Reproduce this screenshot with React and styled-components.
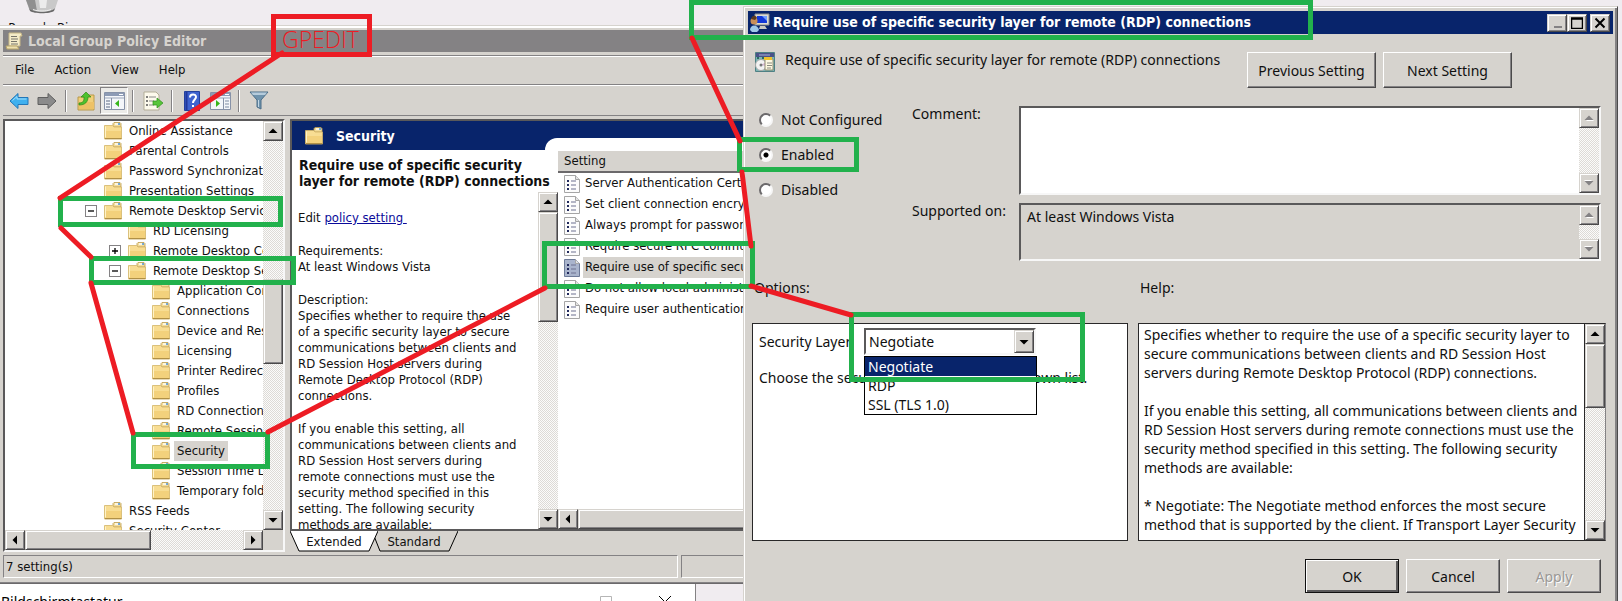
import { useState } from 'react';
import styled, { createGlobalStyle, css } from 'styled-components';

const face = '#d6d3ce';
const navy = '#08246b';
const tahoma = "'DejaVu Sans Condensed', 'DejaVu Sans', sans-serif";
const segoe = "'Noto Sans', 'Open Sans', sans-serif";

const GlobalStyle = createGlobalStyle`
  * {
    box-sizing: border-box;
  }
  body {
    margin: 0;
    overflow: hidden;
  }
  button, input, select, textarea {
    font: inherit;
    color: inherit;
    margin: 0;
  }
`;

const raised = css`
  border: 1px solid;
  border-color: ${face} #4a494a #4a494a ${face};
  box-shadow: inset 1px 1px 0 #fff, inset -1px -1px 0 #848284;
`;

const sunken = css`
  border: 2px solid;
  border-color: #5a595a #f7f7f7 #f7f7f7 #5a595a;
`;

const Desktop = styled.main`
  position: relative;
  height: 100vh;
  overflow: hidden;
  background: #f0ecf0;
  font-family: ${tahoma};
  font-size: 13px;
  line-height: 16px;
  color: #101010;
`;

const DesktopIcon = styled.div`
  width: 84px;
  display: flex;
  flex-direction: column;
  align-items: center;
  gap: 6px;
`;

/* ---------- scroll bars ---------- */

const Bar = styled.div`
  flex: none;
  display: flex;
  flex-direction: ${(p) => (p.$horizontal ? 'row' : 'column')};
  ${(p) => (p.$horizontal ? 'height: 20px;' : 'width: 20px;')}
  background: repeating-conic-gradient(#fbfbfa 0 25%, #dddad6 0 50%) 0 0 / 2px 2px;
`;

const BarButton = styled.button`
  flex: none;
  width: 20px;
  height: 20px;
  padding: 0;
  display: flex;
  align-items: center;
  justify-content: center;
  background: ${face};
  ${raised}
  svg {
    transform: rotate(${(p) => p.$turn}deg);
  }
`;

const Thumb = styled.div`
  flex: none;
  background: ${face};
  ${(p) => (p.$horizontal ? 'width' : 'height')}: ${(p) => p.$size}px;
  ${(p) => (p.$horizontal ? 'margin-left' : 'margin-top')}: ${(p) => p.$start}px;
  ${raised}
`;

const Rest = styled.div`
  flex: 1;
`;

const Arrow = ({ off }) => (
  <svg width="10" height="6" viewBox="0 0 10 6">
    {off && <path d="M2 6h8L6 2z" fill="#fff" />}
    <path d="M0.5 5h9L5 0.5z" fill={off ? '#848284' : '#000'} />
  </svg>
);

const ScrollBar = ({ horizontal, start = 0, size = 0, off }) => (
  <Bar $horizontal={horizontal}>
    <BarButton $turn={horizontal ? -90 : 0} disabled={off} aria-label={horizontal ? 'Left' : 'Up'}>
      <Arrow off={off} />
    </BarButton>
    {size > 0 && <Thumb $horizontal={horizontal} $start={start} $size={size} />}
    <Rest />
    <BarButton $turn={horizontal ? 90 : 180} disabled={off} aria-label={horizontal ? 'Right' : 'Down'}>
      <Arrow off={off} />
    </BarButton>
  </Bar>
);

/* ---------- icons ---------- */

const FolderIcon = () => (
  <svg width="18" height="18" viewBox="0 0 18 18">
    <path d="M9 3V1.5L10 0.5h6l1 1V5H9z" fill="#f3dc9a" stroke="#b99a4e" strokeWidth="0.8" />
    <path d="M11 2h4" stroke="#fff" strokeWidth="1.4" />
    <path d="M14 2h2" stroke="#4b93d8" strokeWidth="1.4" />
    <path d="M0.5 3.5h8l1.5 1.5h7.5v12H0.5z" fill="#f8dd93" stroke="#d3b568" strokeWidth="0.8" />
    <path d="M1 9h16v8H1z" fill="#f0c96c" opacity="0.6" />
    <path d="M1 16.6h16.5" stroke="#a98a42" />
    <path d="M1.5 4.5v11" stroke="#fff3c8" />
  </svg>
);

const PolicyIcon = ({ selected }) => (
  <svg width="16" height="18" viewBox="0 0 16 18">
    <path
      d="M0.5 0.5h11l4 4v13H0.5z"
      fill={selected ? '#a9b4cc' : '#fcfcfc'}
      stroke={selected ? '#6d7a98' : '#a5a5a5'}
    />
    <path d="M11.5 0.5v4h4" fill="#e4e4e4" stroke="#a5a5a5" />
    <path d="M3 6h2M3 10h2M3 14h2" stroke="#222a5c" strokeWidth="2" />
    <path d="M7 6h5M7 10h5M7 14h5" stroke="#6c7090" strokeWidth="1" />
  </svg>
);

const ScrollIcon = () => (
  <svg width="18" height="18" viewBox="0 0 18 18">
    <path d="M4 1h12l1 3h-2v10H4z" fill="#f5ecc9" stroke="#c9b987" />
    <path d="M1 14h11l2 3H2z" fill="#efe0ae" stroke="#b7a56d" />
    <path d="M6 4.5h6M6 7h7M6 9.5h6M6 12h7" stroke="#77746a" />
  </svg>
);

const BackIcon = ({ grey }) => (
  <svg width="20" height="18" viewBox="0 0 20 18">
    <path
      d="M1 9L9 1.5v4h10v7H9v4z"
      transform={grey ? 'rotate(180 10 9)' : undefined}
      fill={grey ? '#8b8b8b' : '#3fb0ef'}
      stroke={grey ? '#5f5f5f' : '#2377b8'}
    />
    {!grey && <path d="M3.5 8.5L8 4.5v2.5h9.5" fill="none" stroke="#a5e0fb" />}
  </svg>
);

const UpFolderIcon = () => (
  <svg width="20" height="20" viewBox="0 0 20 20">
    <path d="M2 6h9l1-2h6v15H2z" fill="#f1cf79" stroke="#b9994b" />
    <path d="M3 11h15v7H3z" fill="#eec266" />
    <path d="M3 12c5 0 5-3 5-6H5l5-5 5 5h-3c0 5-3 8-9 8z" fill="#4dc22e" stroke="#2b8a17" strokeWidth="0.7" />
  </svg>
);

const PaneIcon = ({ flip }) => (
  <svg width="21" height="18" viewBox="0 0 21 18">
    <path d="M0.5 0.5h20v17H0.5z" fill="#f4f6fa" stroke="#8792a8" />
    <path d="M1 1h19v3H1z" fill="#8d9bb5" />
    <path d="M15 2.5h4" stroke="#fff" />
    <path d="M1 6h19" stroke="#9aa5b8" />
    {flip ? (
      <>
        <path d="M13.5 6v11" stroke="#8792a8" />
        <path d="M15 9h4M15 12h4M15 15h4" stroke="#7d8ba3" />
        <path d="M6 8l4 3.5-4 3.500z" fill="#37b51b" />
      </>
    ) : (
      <>
        <path d="M7.5 6v11" stroke="#8792a8" />
        <path d="M2 9h4M2 12h4M2 15h4" stroke="#5d6b83" />
        <path d="M15 8l-4 3.5 4 3.500z" fill="#37b51b" />
      </>
    )}
  </svg>
);

const ExportIcon = () => (
  <svg width="20" height="20" viewBox="0 0 20 20">
    <path d="M1 1h12l3 3v15H1z" fill="#fdfaec" stroke="#b3ad97" />
    <path d="M3 6h2M3 10h2M3 14h2" stroke="#555" strokeWidth="1.5" />
    <path d="M6 6h7M6 10h5M6 14h5" stroke="#8a8a8a" />
    <path d="M10 10h4V7l6 5-6 5v-3h-4z" fill="#58c53a" stroke="#2f8f1c" strokeWidth="0.7" />
  </svg>
);

const HelpIcon = () => (
  <svg width="16" height="20" viewBox="0 0 16 20">
    <path d="M0.5 0.5h15v19H0.5z" fill="#3f63cf" stroke="#24419c" />
    <path d="M2.5 1v18" stroke="#22399a" strokeWidth="2" />
    <path d="M6 6.5c0-4 6-4 6-0.5 0 2.5-3 2.5-3 6" fill="none" stroke="#fff" strokeWidth="2" />
    <path d="M8 14h2v2H8z" fill="#fff" />
  </svg>
);

const FunnelIcon = () => (
  <svg width="20" height="19" viewBox="0 0 20 19">
    <path d="M1 1h18l-7 8v9l-4-2V9z" fill="#6f93ad" stroke="#4b6d87" />
    <path d="M2 1.5h16L16 4H4z" fill="#b5cbdb" />
    <path d="M9.5 9v7" stroke="#c3d6e3" />
  </svg>
);

const BinIcon = () => (
  <svg width="34" height="14" viewBox="0 0 34 14">
    <path d="M1 0h32l-3 9c-3 5-23 5-26 0z" fill="#c9c9c9" />
    <path d="M1 0h9l2 11C8 11 5 10 4 8z" fill="#8f8f8f" />
    <path d="M14 0h8l-1 8h-6z" fill="#ececec" />
    <path d="M4 8c4 5 22 5 26 0l-1 3c-4 3-20 3-24 0z" fill="#6a6a6a" />
    <path d="M8 9.5c5 2 13 2 18 0" fill="none" stroke="#efefef" />
  </svg>
);

const UserScreenIcon = () => (
  <svg width="20" height="20" viewBox="0 0 20 20">
    <path d="M5 1h14v11H5z" fill="#dcdcd6" stroke="#8e8e8a" />
    <path d="M7 3h10v7H7z" fill="#1238d6" />
    <path d="M12 3h5v5z" fill="#6f9dff" />
    <path d="M10 13h5l2 3H9z" fill="#c9c9c4" />
    <circle cx="4" cy="8" r="3.5" fill="#c98f5a" />
    <path d="M1 6c1-4 5-4 6-1L5 7z" fill="#5b3a1e" />
    <path d="M0 17c0-6 8-6 9 0l-2 2H2z" fill="#9fc8ea" />
  </svg>
);

const SettingsIcon = () => (
  <svg width="20" height="20" viewBox="0 0 20 20">
    <path d="M0.5 0.5h19v19H0.5z" fill="#79b5b5" stroke="#4f8084" />
    <path d="M1 1h18v4H1z" fill="#4a5288" />
    <path d="M4 3h11" stroke="#aab3d8" />
    <path d="M3 5v2M8 5v2" stroke="#2c6a60" strokeWidth="2" />
    <circle cx="6" cy="13" r="5.5" fill="#f2f2f2" stroke="#a7a7a7" />
    <path d="M6 13l5-3v4z" fill="#d9b7d6" />
    <circle cx="6" cy="13" r="1.5" fill="#777" />
    <path d="M10 7h8v11h-8z" fill="#fdf8e0" stroke="#8f8a70" />
    <path d="M9 5h8v3H9z" fill="#f0c22c" />
    <path d="M12 11h5M12 13.5h5M12 16h4" stroke="#8a8a80" />
  </svg>
);

/* ---------- policy editor window ---------- */

const EditorWindow = styled.section`
  position: absolute;
  top: 25px;
  left: -2px;
  right: 40%;
  padding: 4px 4px 5px;
  background: ${face};
  border: 1px solid;
  border-color: ${face} #4a494a #6b696b;
  box-shadow: inset 0 2px 0 #fff, inset 0 -1px 0 #848284;
`;

const InactiveTitle = styled.header`
  display: flex;
  align-items: center;
  gap: 5px;
  height: 22px;
  margin-bottom: 3px;
  padding-left: 2px;
  background: #848284;
  color: ${face};
  font-size: 14px;
  font-weight: bold;
`;

const MenuBar = styled.nav`
  display: flex;
  align-items: center;
  height: 30px;
  padding-left: 2px;
  border-top: 1px solid #848284;
  border-bottom: 1px solid #848284;
  box-shadow: inset 0 1px 0 #fff;
`;

const MenuItem = styled.button`
  padding: 0 10px;
  border: 0;
  background: none;
`;

const Toolbar = styled.div`
  display: flex;
  align-items: center;
  height: 31px;
  margin-bottom: 3px;
  padding-left: 2px;
  border-top: 1px solid #fff;
  border-bottom: 1px solid #848284;
`;

const ToolButton = styled.button`
  display: flex;
  align-items: center;
  justify-content: center;
  width: 28px;
  height: 27px;
  padding: 0;
  border: 1px solid transparent;
  background: none;
  ${(p) =>
    p.$pressed &&
    css`
      background: #ecebe8;
      border-color: #848284 #fff #fff #848284;
    `}
`;

const ToolDivider = styled.span`
  width: 2px;
  height: 22px;
  margin: 0 5px 0 4px;
  background: linear-gradient(to right, #848284 50%, #fff 50%);
`;

const Panes = styled.div`
  display: flex;
  height: 433px;
  gap: 5px;
`;

const TreePane = styled.div`
  width: 282px;
  flex: none;
  display: flex;
  flex-direction: column;
  border: 2px solid;
  border-color: #5a595a #f7f7f7 #f7f7f7 #5a595a;
  background: #fff;
`;

const TreeView = styled.div`
  flex: 1;
  min-height: 0;
  display: flex;
`;

const TreeFooter = styled.div`
  padding-right: 20px;
  background: ${face};
`;

const Tree = styled.ul`
  flex: 1;
  min-width: 0;
  margin: 0;
  padding: 0 0 0 80px;
  list-style: none;
  overflow: hidden;
`;

const TreeItem = styled.li`
  display: flex;
  align-items: center;
  gap: 4px;
  height: 20px;
  padding-left: ${(p) => p.$level * 24}px;
  white-space: nowrap;
  svg {
    flex: none;
  }
`;

const Expander = styled.span`
  flex: none;
  display: flex;
  align-items: center;
  justify-content: center;
  width: 12px;
  height: 12px;
  margin-right: 3px;
  border: 1px solid ${(p) => (p.$shown ? '#848284' : 'transparent')};
`;

const Sign = ({ open }) => (
  <svg width="8" height="8" viewBox="0 0 8 8">
    <path d={open ? 'M1 4h6' : 'M1 4h6M4 1v6'} stroke="#000" strokeWidth="1.3" />
  </svg>
);

const ItemText = styled.span`
  padding: 2px 3px;
  background: ${(p) => (p.$selected ? face : 'transparent')};
`;

const DetailsPane = styled.div`
  flex: 1;
  min-width: 0;
  display: flex;
  flex-direction: column;
`;

const DetailsFrame = styled.div`
  flex: 1;
  min-height: 0;
  display: flex;
  flex-direction: column;
  border: 2px solid;
  border-color: #5a595a #f7f7f7 #5a595a #5a595a;
  background: #fff;
`;

const DetailsHeader = styled.div`
  display: flex;
  height: 29px;
  background: ${navy};
`;

const DetailsTitle = styled.h2`
  display: flex;
  align-items: center;
  gap: 13px;
  width: 253px;
  flex: none;
  margin: 0;
  padding-left: 13px;
  color: #fff;
  font-size: 14px;
`;

const Shoulder = styled.div`
  flex: 1;
  align-self: flex-end;
  height: 12px;
  border-top-left-radius: 12px;
  background: #fff;
`;

const DetailsBody = styled.div`
  flex: 1;
  min-height: 0;
  display: flex;
`;

const Description = styled.div`
  width: 266px;
  flex: none;
  display: flex;
  flex-direction: column;
`;

const PolicyName = styled.h3`
  flex: none;
  margin: 0;
  padding: 7px 0 3px 7px;
  font-size: 14px;
  white-space: pre-line;
`;

const DescriptionScroll = styled.div`
  flex: 1;
  min-height: 0;
  display: flex;
`;

const DescriptionText = styled.div`
  flex: 1;
  overflow: hidden;
  padding: 18px 0 0 6px;
  white-space: pre-line;
  p {
    margin: 0 0 17px;
  }
  a {
    color: #0a0a9a;
    white-space: pre;
  }
`;

const SettingsList = styled.div`
  flex: 1;
  min-width: 0;
  display: flex;
  flex-direction: column;
`;

const SettingsTable = styled.table`
  width: 100%;
  margin-top: 1px;
  border-spacing: 0;
  white-space: nowrap;
  th {
    height: 22px;
    padding: 0 6px;
    text-align: left;
    font-weight: normal;
    background: ${face};
    border-bottom: 2px solid #6b696b;
  }
  td {
    height: 21px;
    padding: 0;
  }
`;

const SettingCell = styled.div`
  display: flex;
  align-items: center;
  padding-left: 6px;
  span {
    flex: 1;
    margin-left: 3px;
    padding: 2px 2px 3px;
    background: ${(p) => (p.$selected ? face : 'transparent')};
  }
`;

const TabStrip = styled.div`
  display: flex;
  height: 21px;
`;

const Tab = styled.button`
  position: relative;
  width: 88px;
  padding: 0;
  margin-right: -8px;
  border: 0;
  background: none;
  z-index: ${(p) => (p.$active ? 1 : 0)};
  svg {
    position: absolute;
    inset: 0;
  }
  span {
    position: relative;
  }
`;

const StatusBar = styled.footer`
  display: flex;
  gap: 3px;
  height: 23px;
  margin-top: 3px;
`;

const StatusCell = styled.div`
  flex: ${(p) => (p.$wide ? '0 0 675px' : '1')};
  padding: 3px 2px;
  border: 1px solid;
  border-color: #848284 #fff #fff #848284;
`;

/* ---------- keyboard window at the bottom ---------- */

const KeyboardWindow = styled.section`
  position: absolute;
  top: 583px;
  left: 0;
  width: 696px;
  display: flex;
  padding: 9px 24px 0 1px;
  border-right: 1px solid #848284;
  background: #fff;
  font-family: ${segoe};
  font-size: 14px;
  line-height: 20px;
  color: #000;
`;

const KeyboardTitle = styled.span`
  flex: 1;
`;

const WindowControls = styled.div`
  display: flex;
  gap: 47px;
  padding-top: 4px;
`;

/* ---------- policy dialog ---------- */

const Dialog = styled.section`
  position: absolute;
  top: 6px;
  left: 743px;
  right: 4px;
  bottom: -8px;
  padding: 4px;
  background: ${face};
  border: 1px solid;
  border-color: ${face} #4a494a #4a494a ${face};
  box-shadow: inset 1px 1px 0 #fff, inset -2px 0 0 #848284;
  font-family: ${segoe};
  font-size: 14px;
  line-height: 19px;
`;

const ActiveTitle = styled.header`
  display: flex;
  align-items: center;
  gap: 3px;
  height: 23px;
  padding: 0 3px 0 2px;
  background: ${navy};
  color: #fff;
  font-family: ${tahoma};
  font-size: 14px;
  font-weight: bold;
  strong {
    flex: 1;
  }
`;

const TitleButtons = styled.div`
  display: flex;
  color: #000;
`;

const TitleButton = styled.button`
  width: 20px;
  height: 18px;
  padding: 0;
  margin-left: ${(p) => (p.$apart ? 3 : 0)}px;
  display: flex;
  align-items: center;
  justify-content: center;
  background: ${face};
  ${raised}
`;

const DialogBody = styled.div`
  padding: 18px 7px 0 4px;
`;

const PolicyHeader = styled.div`
  display: flex;
  gap: 7px;
  padding-left: 3px;
  margin-bottom: 18px;
`;

const PolicyLabel = styled.p`
  width: 462px;
  margin: 0 -7px 0 3px;
  line-height: 16px;
`;

const PushButton = styled.button`
  width: ${(p) => (p.$wide ? 129 : 94)}px;
  height: ${(p) => (p.$wide ? 36 : 34)}px;
  padding: 0;
  background: ${face};
  border: 1px solid;
  border-color: #fff #4a494a #4a494a #fff;
  box-shadow: inset -1px -1px 0 #848284;
  ${(p) =>
    p.$main &&
    css`
      border-color: #101010;
      box-shadow: inset 1px 1px 0 #fff, inset -2px -2px 0 #5a595a;
    `}
  &:disabled {
    color: #9a9896;
    text-shadow: 1px 1px 0 #fff;
  }
`;

const StateGrid = styled.div`
  display: grid;
  grid-template-columns: 157px 107px 1fr;
  grid-template-rows: 89px 58px;
  row-gap: 8px;
  padding: 0 5px 0 3px;
  margin-bottom: 17px;
`;

const RadioGroup = styled.div`
  grid-row: span 2;
  display: flex;
  flex-direction: column;
  gap: 8px;
`;

const RadioLabel = styled.label`
  display: flex;
  align-items: center;
  gap: 8px;
  line-height: 27px;
`;

const Radio = styled.input.attrs({ type: 'radio' })`
  appearance: none;
  width: 14px;
  height: 14px;
  margin-left: 4px;
  border: 2px solid;
  border-color: #6b696b #f7f7f7 #f7f7f7 #6b696b;
  border-radius: 50%;
  background: #fff;
  &:checked {
    background: radial-gradient(circle, #000 2px, #fff 3px);
  }
`;

const FieldLabel = styled.label`
  line-height: 16px;
`;

const Field = styled.div`
  display: flex;
  background: ${(p) => (p.$readOnly ? face : '#fff')};
  ${sunken}
  textarea {
    flex: 1;
    min-width: 0;
    padding: 2px 6px;
    border: 0;
    outline: 0;
    resize: none;
    overflow: hidden;
    background: transparent;
  }
`;

const Panels = styled.div`
  display: grid;
  grid-template-columns: 376px 1fr;
  column-gap: 10px;
`;

const PanelTitle = styled.h4`
  margin: 0 0 26px 2px;
  font-size: 14px;
  font-weight: normal;
`;

const OptionsPanel = styled.div`
  height: 218px;
  padding: 4px 6px;
  border: 1px solid #292829;
  background: #fff;
  p {
    margin: 13px 0 0;
  }
`;

const OptionRow = styled.div`
  display: flex;
  align-items: center;
  label {
    width: 105px;
  }
`;

const Combo = styled.div`
  position: relative;
  display: flex;
  width: 172px;
  height: 27px;
  background: #fff;
  ${sunken}
  select {
    flex: 1;
    padding: 0 3px;
    border: 0;
    outline: 0;
    appearance: none;
    background: transparent;
  }
`;

const ComboArrow = styled.span`
  display: flex;
  align-items: center;
  justify-content: center;
  width: 20px;
  background: ${face};
  pointer-events: none;
  ${raised}
  svg {
    transform: rotate(180deg);
  }
`;

const ComboMenu = styled.ul`
  position: absolute;
  top: 26px;
  left: -2px;
  width: 173px;
  margin: 0;
  padding: 0;
  list-style: none;
  border: 1px solid #000;
  background: #fff;
`;

const ComboOption = styled.li`
  padding: 0 3px;
  background: ${(p) => (p.$selected ? navy : 'transparent')};
  color: ${(p) => (p.$selected ? '#fff' : 'inherit')};
`;

const HelpPanel = styled.div`
  display: flex;
  height: 218px;
  border: 1px solid #292829;
  border-right-color: #848284;
  background: #fff;
`;

const HelpText = styled.div`
  flex: 1;
  overflow: hidden;
  padding: 1px 5px;
  border-right: 1px solid #292829;
  white-space: pre-line;
`;

const DialogFooter = styled.footer`
  display: flex;
  justify-content: flex-end;
  gap: 7px;
  margin-top: 18px;
  padding-right: 5px;
`;

/* ---------- markup drawn over the windows ---------- */

const Markup = styled.svg`
  position: absolute;
  inset: 0;
  width: 100%;
  height: 100%;
  pointer-events: none;
  fill: none;
  stroke-width: 5px;
  stroke-linecap: round;
  rect {
    stroke: #22b14c;
  }
  line,
  rect.caption {
    stroke: #ed1c24;
  }
  text {
    fill: #ed1c24;
    font: 300 23px 'Open Sans', sans-serif;
  }
`;

const tree = [
  ['Online Assistance', 0],
  ['Parental Controls', 0],
  ['Password Synchronization', 0],
  ['Presentation Settings', 0],
  ['Remote Desktop Services', 0, '-'],
  ['RD Licensing', 1],
  ['Remote Desktop Connection Client', 1, '+'],
  ['Remote Desktop Session Host', 1, '-'],
  ['Application Compatibility', 2],
  ['Connections', 2],
  ['Device and Resource Redirection', 2],
  ['Licensing', 2],
  ['Printer Redirection', 2],
  ['Profiles', 2],
  ['RD Connection Broker', 2],
  ['Remote Session Environment', 2],
  ['Security', 2],
  ['Session Time Limits', 2],
  ['Temporary folders', 2],
  ['RSS Feeds', 0],
  ['Security Center', 0],
];

const policies = [
  'Server Authentication Certificate Template',
  'Set client connection encryption level',
  'Always prompt for password upon connection',
  'Require secure RPC communication',
  'Require use of specific security layer for remote (RDP) connections',
  'Do not allow local administrators to customize permissions',
  'Require user authentication for remote connections',
];

const layers = ['Negotiate', 'RDP', 'SSL (TLS 1.0)'];

const frames = [
  [691, 2, 619, 35],
  [739, 139, 117, 30],
  [60, 198, 220, 26],
  [91, 258, 202, 24],
  [133, 434, 134, 32],
  [544, 243, 208, 43],
  [851, 314, 231, 65],
];

const links = [
  [282, 53, 60, 198],
  [61, 228, 91, 257],
  [91, 283, 133, 433],
  [268, 432, 545, 288],
  [692, 38, 740, 141],
  [742, 172, 751, 246],
  [751, 286, 851, 315],
];

const PolicyEditor = () => (
  <EditorWindow>
    <InactiveTitle>
      <ScrollIcon />
      Local Group Policy Editor
    </InactiveTitle>
    <MenuBar>
      {['File', 'Action', 'View', 'Help'].map((name) => (
        <MenuItem key={name}>{name}</MenuItem>
      ))}
    </MenuBar>
    <Toolbar>
      <ToolButton aria-label="Back"><BackIcon /></ToolButton>
      <ToolButton aria-label="Forward"><BackIcon grey /></ToolButton>
      <ToolDivider />
      <ToolButton aria-label="Up one level"><UpFolderIcon /></ToolButton>
      <ToolButton aria-label="Console tree" $pressed><PaneIcon /></ToolButton>
      <ToolDivider />
      <ToolButton aria-label="Export list"><ExportIcon /></ToolButton>
      <ToolDivider />
      <ToolButton aria-label="Help"><HelpIcon /></ToolButton>
      <ToolButton aria-label="Action pane"><PaneIcon flip /></ToolButton>
      <ToolDivider />
      <ToolButton aria-label="Filter"><FunnelIcon /></ToolButton>
    </Toolbar>
    <Panes>
      <TreePane>
        <TreeView>
          <Tree>
            {tree.map(([name, level, sign]) => (
              <TreeItem key={name} $level={level}>
                <Expander $shown={!!sign}>{sign && <Sign open={sign === '-'} />}</Expander>
                <FolderIcon />
                <ItemText $selected={name === 'Security'}>{name}</ItemText>
              </TreeItem>
            ))}
          </Tree>
          <ScrollBar start={138} size={85} />
        </TreeView>
        <TreeFooter>
          <ScrollBar horizontal size={126} />
        </TreeFooter>
      </TreePane>
      <DetailsPane>
        <DetailsFrame>
          <DetailsHeader>
            <DetailsTitle>
              <FolderIcon />
              Security
            </DetailsTitle>
            <Shoulder />
          </DetailsHeader>
          <DetailsBody>
            <Description>
              <PolicyName>{'Require use of specific security\nlayer for remote (RDP) connections'}</PolicyName>
              <DescriptionScroll>
                <DescriptionText>
                  <p>
                    Edit <a href="#policy">policy setting </a>
                  </p>
                  <p>{'Requirements:\nAt least Windows Vista'}</p>
                  <p>
                    {`Description:
                    Specifies whether to require the use
                    of a specific security layer to secure
                    communications between clients and
                    RD Session Host servers during
                    Remote Desktop Protocol (RDP)
                    connections.`}
                  </p>
                  <p>
                    {`If you enable this setting, all
                    communications between clients and
                    RD Session Host servers during
                    remote connections must use the
                    security method specified in this
                    setting. The following security
                    methods are available:`}
                  </p>
                </DescriptionText>
                <ScrollBar size={110} />
              </DescriptionScroll>
            </Description>
            <SettingsList>
              <SettingsTable>
                <thead>
                  <tr>
                    <th>Setting</th>
                  </tr>
                </thead>
                <tbody>
                  {policies.map((name, i) => (
                    <tr key={name}>
                      <td>
                        <SettingCell $selected={i === 4}>
                          <PolicyIcon selected={i === 4} />
                          <span>{name}</span>
                        </SettingCell>
                      </td>
                    </tr>
                  ))}
                </tbody>
              </SettingsTable>
              <Rest />
              <ScrollBar horizontal size={300} />
            </SettingsList>
          </DetailsBody>
        </DetailsFrame>
        <TabStrip>
          <Tab $active>
            <svg width="88" height="21" viewBox="0 0 88 21">
              <path d="M0 0L9 20H79L88 0" fill="#fff" stroke="#000" />
            </svg>
            <span>Extended</span>
          </Tab>
          <Tab>
            <svg width="88" height="21" viewBox="0 0 88 21">
              <path d="M2 0L10 20H79L88 0" fill={face} stroke="#000" />
            </svg>
            <span>Standard</span>
          </Tab>
        </TabStrip>
      </DetailsPane>
    </Panes>
    <StatusBar>
      <StatusCell $wide>7 setting(s)</StatusCell>
      <StatusCell />
    </StatusBar>
  </EditorWindow>
);

const PolicyDialog = () => {
  const [state, setState] = useState('Enabled');
  const [layer, setLayer] = useState('Negotiate');
  return (
    <Dialog>
      <ActiveTitle>
        <UserScreenIcon />
        <strong>Require use of specific security layer for remote (RDP) connections</strong>
        <TitleButtons>
          <TitleButton aria-label="Minimize">
            <svg width="12" height="12"><path d="M3 10h8" stroke="#848284" strokeWidth="2" /></svg>
          </TitleButton>
          <TitleButton aria-label="Maximize">
            <svg width="12" height="12">
              <path d="M0.5 1h11v10.5h-11zM0 2h12" fill="none" stroke="#000" strokeWidth="1.5" />
            </svg>
          </TitleButton>
          <TitleButton aria-label="Close" $apart>
            <svg width="12" height="12"><path d="M1.5 1.5l9 9M10.5 1.5l-9 9" stroke="#000" strokeWidth="2" /></svg>
          </TitleButton>
        </TitleButtons>
      </ActiveTitle>
      <DialogBody>
        <PolicyHeader>
          <SettingsIcon />
          <PolicyLabel>Require use of specific security layer for remote (RDP) connections</PolicyLabel>
          <PushButton $wide>Previous Setting</PushButton>
          <PushButton $wide>Next Setting</PushButton>
        </PolicyHeader>
        <StateGrid>
          <RadioGroup>
            {['Not Configured', 'Enabled', 'Disabled'].map((name) => (
              <RadioLabel key={name}>
                <Radio name="state" checked={state === name} onChange={() => setState(name)} />
                {name}
              </RadioLabel>
            ))}
          </RadioGroup>
          <FieldLabel htmlFor="comment">Comment:</FieldLabel>
          <Field>
            <textarea id="comment" />
            <ScrollBar off />
          </Field>
          <FieldLabel htmlFor="supported">Supported on:</FieldLabel>
          <Field $readOnly>
            <textarea id="supported" readOnly value="At least Windows Vista" />
            <ScrollBar off />
          </Field>
        </StateGrid>
        <Panels>
          <PanelTitle>Options:</PanelTitle>
          <PanelTitle>Help:</PanelTitle>
          <OptionsPanel>
            <OptionRow>
              <label htmlFor="layer">Security Layer</label>
              <Combo>
                <select id="layer" value={layer} onChange={(e) => setLayer(e.target.value)}>
                  {layers.map((name) => (
                    <option key={name}>{name}</option>
                  ))}
                </select>
                <ComboArrow>
                  <Arrow />
                </ComboArrow>
                <ComboMenu>
                  {layers.map((name) => (
                    <ComboOption key={name} $selected={name === layer} onClick={() => setLayer(name)}>
                      {name}
                    </ComboOption>
                  ))}
                </ComboMenu>
              </Combo>
            </OptionRow>
            <p>Choose the security layer from the drop-down list.</p>
          </OptionsPanel>
          <HelpPanel>
            <HelpText>
              {`Specifies whether to require the use of a specific security layer to
              secure communications between clients and RD Session Host
              servers during Remote Desktop Protocol (RDP) connections.

              If you enable this setting, all communications between clients and
              RD Session Host servers during remote connections must use the
              security method specified in this setting. The following security
              methods are available:

              * Negotiate: The Negotiate method enforces the most secure
              method that is supported by the client. If Transport Layer Security`}
            </HelpText>
            <ScrollBar size={64} />
          </HelpPanel>
        </Panels>
        <DialogFooter>
          <PushButton $main>OK</PushButton>
          <PushButton>Cancel</PushButton>
          <PushButton disabled>Apply</PushButton>
        </DialogFooter>
      </DialogBody>
    </Dialog>
  );
};

const App = () => (
  <>
    <GlobalStyle />
    <Desktop>
      <DesktopIcon>
        <BinIcon />
        Recycle Bin
      </DesktopIcon>
      <KeyboardWindow>
        <KeyboardTitle>Bildschirmtastatur</KeyboardTitle>
        <WindowControls>
          <svg width="12" height="12"><path d="M0.5 0.5h11v11h-11z" fill="none" stroke="#b5b5b5" /></svg>
          <svg width="12" height="12"><path d="M0 0l12 12M12 0L0 12" stroke="#000" /></svg>
        </WindowControls>
      </KeyboardWindow>
      <PolicyEditor />
      <PolicyDialog />
      <Markup>
        <g transform="translate(0.5 0.5)">
          {frames.map(([x, y, width, height]) => (
            <rect key={x} x={x} y={y} width={width} height={height} />
          ))}
          <rect className="caption" x="273" y="16" width="96" height="38" />
        </g>
        {links.map(([x1, y1, x2, y2]) => (
          <line key={x1 + y1} x1={x1} y1={y1} x2={x2} y2={y2} />
        ))}
        <text x="282" y="48" stroke="none">GPEDIT</text>
      </Markup>
    </Desktop>
  </>
);

export default App;
